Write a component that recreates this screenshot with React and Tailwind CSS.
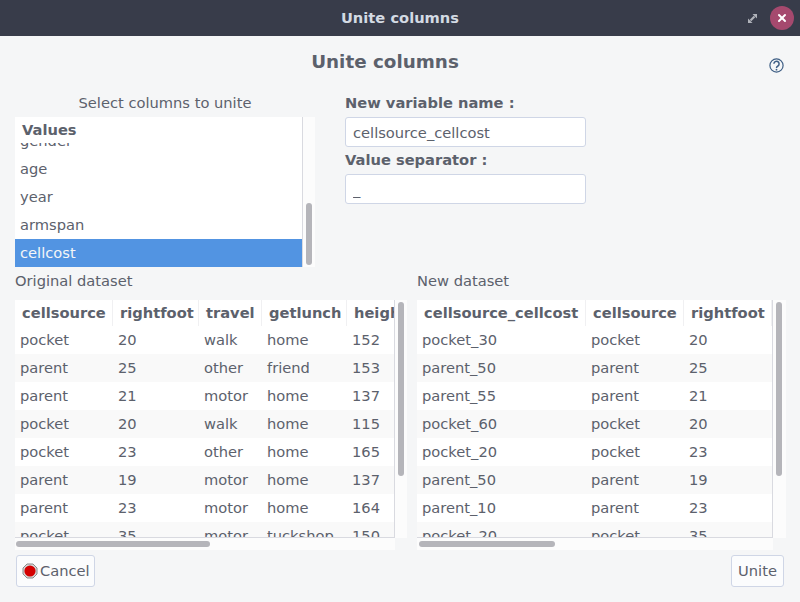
import { X } from 'lucide-react';

const originalRows = [
  ['pocket', '20', 'walk', 'home', '152'],
  ['parent', '25', 'other', 'friend', '153'],
  ['parent', '21', 'motor', 'home', '137'],
  ['pocket', '20', 'walk', 'home', '115'],
  ['pocket', '23', 'other', 'home', '165'],
  ['parent', '19', 'motor', 'home', '137'],
  ['parent', '23', 'motor', 'home', '164'],
  ['pocket', '35', 'motor', 'tuckshop', '150'],
];

const newRows = [
  ['pocket_30', 'pocket', '20'],
  ['parent_50', 'parent', '25'],
  ['parent_55', 'parent', '21'],
  ['pocket_60', 'pocket', '20'],
  ['pocket_20', 'pocket', '23'],
  ['parent_50', 'parent', '19'],
  ['parent_10', 'parent', '23'],
  ['pocket_20', 'pocket', '35'],
];

const DataTable = ({ columns, rows, width }) => (
  <div className="h-[237px] min-w-0 overflow-hidden bg-white" style={{ width }}>
    <div className="flex h-[26px]">
      {columns.map((col) => (
        <div
          key={col.name}
          className="h-[26px] shrink-0 overflow-hidden border-r border-[#f0f0f2] pl-[7px] text-[14.67px] leading-[26px] font-bold whitespace-nowrap text-[#5c616c]"
          style={{ width: col.width }}
        >
          {col.name}
        </div>
      ))}
    </div>
    {rows.map((row, i) => (
      <div key={i} className={`flex h-[28px] ${i % 2 === 1 ? 'bg-[#f9f9f9]' : 'bg-white'}`}>
        {row.map((cell, j) => (
          <div
            key={j}
            className="shrink-0 pl-[5px] text-[14.67px] leading-[28px] text-[#5c616c]"
            style={{ width: columns[j].width }}
          >
            {cell}
          </div>
        ))}
      </div>
    ))}
  </div>
);

const DataPanel = ({ title, columns, rows, tableWidth, trackWidth, thumbLeft, thumbWidth }) => (
  <div className="flex flex-col">
    <div className="h-[33px] pt-[4px] text-[14.67px] leading-[20px] text-[#5c616c]">{title}</div>
    <div className="flex">
      <div className="border-r border-b border-[#d9dae0]">
        <DataTable columns={columns} rows={rows} width={tableWidth} />
      </div>
      <div className="h-[238px] bg-[#fcfcfc] pt-[2px] pl-[3px]" style={{ width: trackWidth }}>
        <div className="h-[174px] w-[6px] rounded-[3px] bg-[#b5b5ba]" />
      </div>
    </div>
    <div className="h-[12px] bg-[#fcfcfc] pt-[3px]" style={{ width: tableWidth + 1, paddingLeft: thumbLeft }}>
      <div className="h-[6px] rounded-[3px] bg-[#b5b5ba]" style={{ width: thumbWidth }} />
    </div>
  </div>
);

const originalColumns = [
  { name: 'cellsource', width: 98 },
  { name: 'rightfoot', width: 86 },
  { name: 'travel', width: 63 },
  { name: 'getlunch', width: 85 },
  { name: 'height', width: 60 },
];

const newColumns = [
  { name: 'cellsource_cellcost', width: 169 },
  { name: 'cellsource', width: 98 },
  { name: 'rightfoot', width: 88 },
];

const inputClass =
  'h-[30px] w-[241px] rounded-[3px] border border-[#cfd6e6] bg-white px-[7px] text-[14.67px] text-[#5c616c] outline-none';

export default function App() {
  return (
    <div className="flex h-[602px] w-[800px] flex-col overflow-hidden bg-[#f5f6f7] font-['DejaVu_Sans',sans-serif]">
      <div className="flex h-[36px] shrink-0 items-center bg-[#383c4a] pr-[6px]">
        <div className="w-[734px] pl-[66px] text-center text-[14.67px] font-bold text-[#d3dae3]">Unite columns</div>
        <div className="flex w-[36px] justify-center">
          <svg width="9" height="9" viewBox="0 0 9 9" fill="#b0b3ba">
            <polygon points="4.5,0 9,0 9,4.5" />
            <polygon points="0,4.5 0,9 4.5,9" />
            <path d="M6.5 2.5 2.5 6.5" stroke="#b0b3ba" strokeWidth="2.2" />
          </svg>
        </div>
        <div className="flex h-[24px] w-[24px] items-center justify-center rounded-full bg-[#a5496e]">
          <X className="h-[12px] w-[12px] text-white" strokeWidth={4} />
        </div>
      </div>

      <div className="flex flex-1 flex-col px-[15px]">
        <div className="flex h-[54px] shrink-0">
          <div className="flex-1 pt-[13px] text-center text-[18.33px] leading-[26px] font-bold text-[#5c616c]">
            Unite columns
          </div>
          <div className="flex w-[30px] justify-end pt-[22px] pr-[1px]">
            <svg width="15" height="15" viewBox="0 0 15 15" fill="none">
              <circle cx="7.5" cy="7.5" r="6.6" stroke="#3f5f85" strokeWidth="1.2" />
              <path d="M4.9 5.8a2.6 2.6 0 1 1 4 2.2c-.9.5-1.4 1-1.4 1.9" stroke="#3f5f85" strokeWidth="1.5" />
              <circle cx="7.5" cy="11.7" r="0.9" fill="#3f5f85" />
            </svg>
          </div>
        </div>

        <div className="flex h-[177px] shrink-0">
          <div className="w-[300px] shrink-0">
            <div className="h-[27px] pt-[3px] text-center text-[14.67px] leading-[20px] text-[#5c616c]">
              Select columns to unite
            </div>
            <div className="flex h-[150px] bg-[#fcfcfc]">
              <div className="relative flex h-[150px] w-[288px] flex-col justify-end overflow-hidden border-r border-[#d9dae0] bg-white">
                {['gender', 'age', 'year', 'armspan'].map((name) => (
                  <div key={name} className="h-[28px] shrink-0 pl-[5px] text-[14.67px] leading-[28px] text-[#5c616c]">
                    {name}
                  </div>
                ))}
                <div className="h-[28px] shrink-0 bg-[#5294e2] pl-[5px] text-[14.67px] leading-[28px] text-[#f5f6f7]">
                  cellcost
                </div>
                <div className="absolute top-0 right-0 left-0 h-[26px] bg-white pl-[7px] text-[14.67px] leading-[26px] font-bold text-[#5c616c]">
                  Values
                </div>
              </div>
              <div className="pt-[86px] pl-[3px]">
                <div className="h-[62px] w-[6px] rounded-[3px] bg-[#b5b5ba]" />
              </div>
            </div>
          </div>
          <div className="ml-[30px] flex flex-col">
            <div className="h-[27px] pt-[3px] text-[14.67px] leading-[20px] font-bold text-[#5c616c]">New variable name :</div>
            <input className={inputClass} defaultValue="cellsource_cellcost" />
            <div className="h-[27px] pt-[3px] text-[14.67px] leading-[20px] font-bold text-[#5c616c]">Value separator :</div>
            <input className={inputClass} defaultValue="_" />
          </div>
        </div>

        <div className="flex h-[283px] shrink-0">
          <DataPanel
            title="Original dataset"
            columns={originalColumns}
            rows={originalRows}
            tableWidth={379}
            trackWidth={12}
            thumbLeft={1}
            thumbWidth={194}
          />
          <div className="ml-[10px]">
            <DataPanel
              title="New dataset"
              columns={newColumns}
              rows={newRows}
              tableWidth={355}
              trackWidth={13}
              thumbLeft={2}
              thumbWidth={136}
            />
          </div>
        </div>

        <div className="flex justify-between pt-[5px] pr-[1px] pl-[1px]">
          <button className="flex h-[32px] w-[79px] items-center gap-[2px] rounded-[3px] border border-[#cfd6e6] bg-[#fbfcfd] pl-[5px] text-[14.67px] text-[#5c616c]">
            <svg width="16" height="16" viewBox="0 0 16 16">
              <polygon points="5,1 11,1 15,5 15,11 11,15 5,15 1,11 1,5" fill="#d8d8d8" stroke="#8a8a8a" />
              <circle cx="8" cy="8" r="5.6" fill="#d40000" />
            </svg>
            Cancel
          </button>
          <button className="h-[32px] w-[53px] rounded-[3px] border border-[#cfd6e6] bg-[#fbfcfd] text-[14.67px] text-[#5c616c]">
            Unite
          </button>
        </div>
      </div>
    </div>
  );
}
